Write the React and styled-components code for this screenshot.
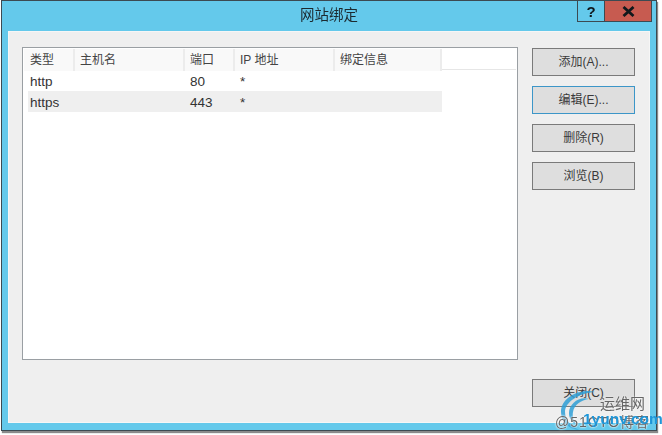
import React from 'react';
import styled, { createGlobalStyle } from 'styled-components';

const GlobalStyle = createGlobalStyle`
  html, body { margin: 0; background: #fff; }
  body { font-family: "Liberation Sans", "Noto Sans CJK SC", sans-serif; }
`;

const Page = styled.div`
  position: relative;
  width: 662px;
  height: 435px;
  overflow: hidden;
`;

const Window = styled.div`
  box-sizing: border-box;
  width: 656px;
  height: 431px;
  margin: 0 0 0 1px;
  background: #64c9eb;
  border: 1px solid #3c4a52;
  box-shadow: 1px 2px 1px #8a8a8a;
  display: flex;
  flex-direction: column;
  filter: blur(0.35px);
`;

const TitleBar = styled.div`
  height: 30px;
  display: grid;
  grid-template-columns: 1fr auto 1fr;
  flex: none;
`;

const Title = styled.div`
  grid-column: 2;
  font-size: 14.5px;
  line-height: 28px;
  color: #1c2a30;
`;

const Caption = styled.div`
  grid-column: 3;
  justify-self: end;
  display: flex;
  margin-right: 4px;
  height: 22px;
  margin-top: -1px;
`;

const CaptionButton = styled.div`
  box-sizing: border-box;
  width: ${p => (p.$close ? '47px' : '28px')};
  display: flex;
  align-items: center;
  justify-content: center;
  background: ${p => (p.$close ? '#c75b50' : '#64c9eb')};
  border: 1px solid #3c4a52;
  border-left-width: ${p => (p.$close ? 0 : '1px')};
  font-size: 15px;
  font-weight: 700;
  color: #10181c;
`;

const Content = styled.div`
  flex: 1;
  margin: 0 6px 7px 6px;
  background: #efefef;
  border: 1px solid #f6f6f6;
  padding: 15px 14px 0 13px;
  display: grid;
  grid-template-columns: 496px 103px;
  column-gap: 14px;
  align-items: start;
`;

const List = styled.div`
  box-sizing: border-box;
  height: 313px;
  background: #fff;
  border: 1px solid #9a9fa3;
  padding: 1px;
`;

const HeaderRow = styled.div`
  display: grid;
  grid-template-columns: 51px 110px 50px 100px 107px;
  height: 20px;
  border-bottom: 1px solid #e6e6e6;
`;

const HeaderCell = styled.div`
  background: #f9f9f9;
  border-right: 2px solid #ececec;
  padding-left: ${p => (p.$first ? '6px' : '5px')};
  font-size: 12px;
  line-height: 22px;
  color: #444;
`;

const Row = styled.div`
  display: grid;
  grid-template-columns: 47px 110px 50px 100px 107px;
  height: 21px;
  margin-left: 4px;
  width: 414px;
  background: ${p => (p.$alt ? '#efefef' : '#fff')};
  font-size: 13.5px;
  line-height: 23px;
  color: #333;
`;

const Cell = styled.div`
  padding-left: ${p => (p.$first ? '2px' : '5px')};
  white-space: nowrap;
`;

const Side = styled.div`
  display: flex;
  flex-direction: column;
  height: 359px;
  gap: 10px;
  padding-top: 1px;
`;

const Button = styled.div`
  box-sizing: border-box;
  height: 28px;
  flex: none;
  background: #dedede;
  border: 1px solid ${p => (p.$focus ? '#3c96c8' : '#7a7a7a')};
  text-align: center;
  font-size: 12px;
  line-height: 26px;
  color: #3a3a3a;
  margin-top: ${p => (p.$bottom ? 'auto' : 0)};
`;

const Watermark = styled.div`
  position: absolute;
  left: 555px;
  top: 385px;
  width: 107px;
  height: 50px;
  pointer-events: none;
`;

const Swirl = styled.svg`
  position: absolute;
  left: 4px;
  top: 5px;
`;

const WatermarkCn = styled.span`
  position: absolute;
  left: 45px;
  top: 7px;
  font-size: 15px;
  color: #666;
  white-space: nowrap;
  text-shadow: 0 0 2px #fff;
`;

const WatermarkBlog = styled.span`
  position: absolute;
  left: 0;
  top: 26px;
  font-size: 14px;
  letter-spacing: 1px;
  color: #666;
  white-space: nowrap;
  text-shadow: 0 0 2px #fff, 0 0 2px #fff;
`;

const WatermarkSite = styled.span`
  position: absolute;
  left: 28px;
  top: 25px;
  font-size: 15.5px;
  font-weight: 700;
  color: #1f96d8;
  white-space: nowrap;
`;

const bindings = [
  { type: 'http', port: '80', ip: '*' },
  { type: 'https', port: '443', ip: '*' },
];

const headers = ['类型', '主机名', '端口', 'IP 地址', '绑定信息'];

export default function App() {
  return (
    <Page>
      <GlobalStyle />
      <Window>
        <TitleBar>
          <Title>网站绑定</Title>
          <Caption>
            <CaptionButton>?</CaptionButton>
            <CaptionButton $close>
              <svg width="13" height="11" viewBox="0 0 13 11">
                <path d="M1.5 1L11.5 10M11.5 1L1.5 10" stroke="#10181c" strokeWidth="2.8" fill="none" />
              </svg>
            </CaptionButton>
          </Caption>
        </TitleBar>
        <Content>
          <List>
            <HeaderRow>
              {headers.map((h, i) => (
                <HeaderCell key={h} $first={i === 0}>{h}</HeaderCell>
              ))}
            </HeaderRow>
            {bindings.map((b, i) => (
              <Row key={b.type} $alt={i % 2 === 1}>
                <Cell $first>{b.type}</Cell>
                <Cell />
                <Cell>{b.port}</Cell>
                <Cell>{b.ip}</Cell>
                <Cell />
              </Row>
            ))}
          </List>
          <Side>
            <Button>添加(A)...</Button>
            <Button $focus>编辑(E)...</Button>
            <Button>删除(R)</Button>
            <Button>浏览(B)</Button>
            <Button $bottom>关闭(C)</Button>
          </Side>
        </Content>
      </Window>
      <Watermark>
        <Swirl width="40" height="42" viewBox="0 0 40 42" fill="none">
          <path d="M36 2C20 -2 2 8 2 22C2 32 10 39 20 40C12 36 6 30 6 22C6 12 20 3 36 2Z" fill="#2f9fd6" opacity="0.85" />
          <path d="M30 9C20 6 10 14 10 23C10 29 14 33 18 35C15 31 13 27 14 22C15 15 22 10 30 9Z" fill="#2f9fd6" opacity="0.85" />
        </Swirl>
        <WatermarkCn>运维网</WatermarkCn>
        <WatermarkBlog>@51CTO博客</WatermarkBlog>
        <WatermarkSite>1yunv.com</WatermarkSite>
      </Watermark>
    </Page>
  );
}
